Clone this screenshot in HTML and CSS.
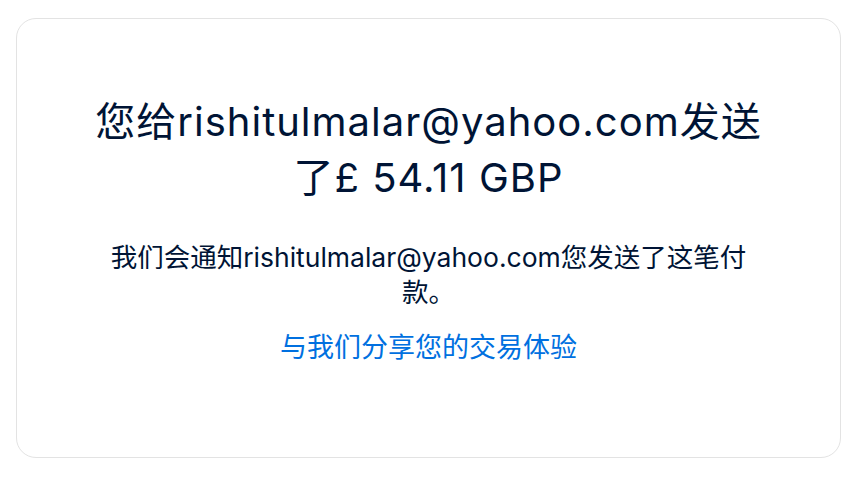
FILE: index.html
```html
<!DOCTYPE html>
<html lang="zh-CN">
<head>
  <meta charset="UTF-8">
  <meta name="viewport" content="width=device-width, initial-scale=1.0">
  <title>付款已发送</title>
  <link rel="stylesheet" href="styles.css">
</head>
<body>
  <div class="card">
    <!-- Confirmation heading -->
    <h1 class="title">您给rishitulmalar@yahoo.com发送了£ 54.11 GBP</h1>

    <!-- Notice -->
    <p class="notice">我们会通知rishitulmalar@yahoo.com您发送了这笔付款。</p>

    <!-- Feedback link -->
    <a class="feedback" href="#">与我们分享您的交易体验</a>
  </div>
</body>
</html>
```

FILE: styles.css
```css
body {
  margin: 0;
  padding: 18px 11px 22px 16px;
  background-color: #ffffff;
  font-family: Inter, "Noto Sans CJK SC", sans-serif;
  color: #001435;
}
.card {
  display: flex;
  flex-direction: column;
  align-items: center;
  height: 440px;
  box-sizing: border-box;
  padding: 75px 20px 0;
  border: 1px solid #e3e3e3;
  border-radius: 20px;
  text-align: center;
}
.title {
  max-width: 690px;
  margin: 0 0 34px;
  font-size: 40px;
  font-weight: normal;
  line-height: 56px;
  letter-spacing: 1px;
}
.notice {
  max-width: 650px;
  margin: 0 0 20px;
  font-size: 26.5px;
  line-height: 35px;
}
.feedback {
  font-size: 27px;
  line-height: 35px;
  color: #0070e0;
  text-decoration: none;
}
```
